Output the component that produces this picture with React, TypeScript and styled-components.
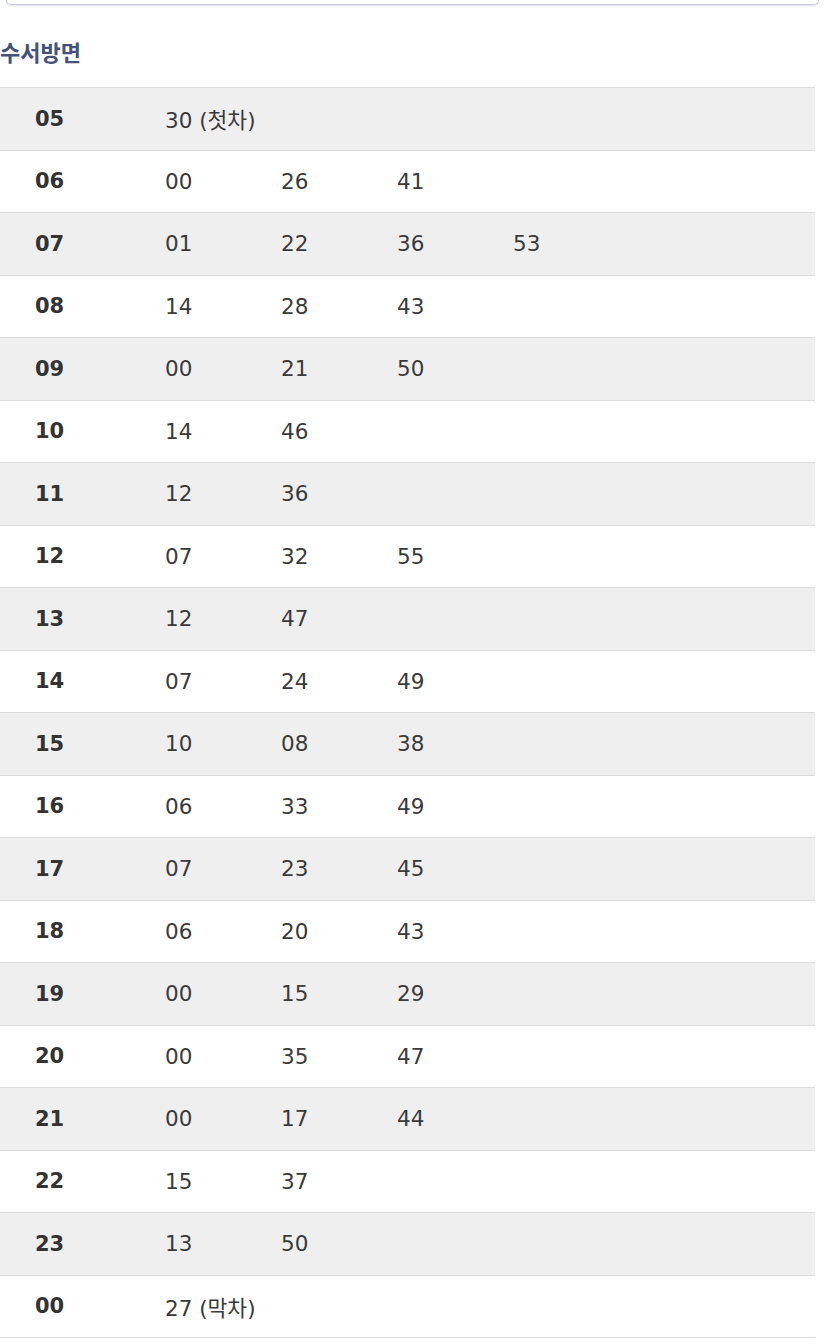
import React from "react";
import styled, { createGlobalStyle } from "styled-components";

const GlobalStyle = createGlobalStyle`
  html, body {
    margin: 0;
    padding: 0;
    background: #fff;
  }
  body {
    font-family: "DejaVu Sans", "Noto Sans CJK KR", sans-serif;
    color: #333;
  }
`;

const Page = styled.div`
  width: 827px;
  overflow: hidden;
`;

// bottom edge of the search card above the timetable
const CardEdge = styled.div`
  height: 4px;
  margin: 0 8px 0 6px;
  border: 1px solid #c7cadb;
  border-top: none;
  border-radius: 0 0 8px 8px;
  box-shadow: 0 1px 2px rgba(120, 125, 160, 0.25);
`;

const Direction = styled.h2`
  margin: 0;
  padding: 30px 0 0 0;
  height: 52px;
  font-family: "Noto Sans CJK KR", sans-serif;
  font-size: 22px;
  font-weight: 700;
  color: #44527a;
  letter-spacing: 0;
`;

const Table = styled.div`
  width: 815px;
  border-top: 1px solid #dcdcdc;
`;

const Row = styled.div<{ $shaded: boolean }>`
  display: grid;
  grid-template-columns: 165px repeat(5, 116px);
  align-items: center;
  height: 61.5px;
  border-bottom: 1px solid #dcdcdc;
  background: ${(p) => (p.$shaded ? "#efefef" : "#fff")};
`;

const Hour = styled.div`
  padding-left: 35px;
  font-size: 21px;
  font-weight: 700;
  color: #333;
`;

const Minute = styled.div`
  font-size: 21.5px;
  font-weight: 400;
  color: #3a3a3a;
`;

const schedule: [string, string[]][] = [
  ["05", ["30 (첫차)"]],
  ["06", ["00", "26", "41"]],
  ["07", ["01", "22", "36", "53"]],
  ["08", ["14", "28", "43"]],
  ["09", ["00", "21", "50"]],
  ["10", ["14", "46"]],
  ["11", ["12", "36"]],
  ["12", ["07", "32", "55"]],
  ["13", ["12", "47"]],
  ["14", ["07", "24", "49"]],
  ["15", ["10", "08", "38"]],
  ["16", ["06", "33", "49"]],
  ["17", ["07", "23", "45"]],
  ["18", ["06", "20", "43"]],
  ["19", ["00", "15", "29"]],
  ["20", ["00", "35", "47"]],
  ["21", ["00", "17", "44"]],
  ["22", ["15", "37"]],
  ["23", ["13", "50"]],
  ["00", ["27 (막차)"]],
];

export default function App() {
  return (
    <Page>
      <GlobalStyle />
      <CardEdge />
      <Direction>수서방면</Direction>
      <Table>
        {schedule.map(([hour, mins], i) => (
          <Row key={hour + i} $shaded={i % 2 === 0}>
            <Hour>{hour}</Hour>
            {mins.map((m, j) => (
              <Minute key={j}>{m}</Minute>
            ))}
          </Row>
        ))}
      </Table>
    </Page>
  );
}
